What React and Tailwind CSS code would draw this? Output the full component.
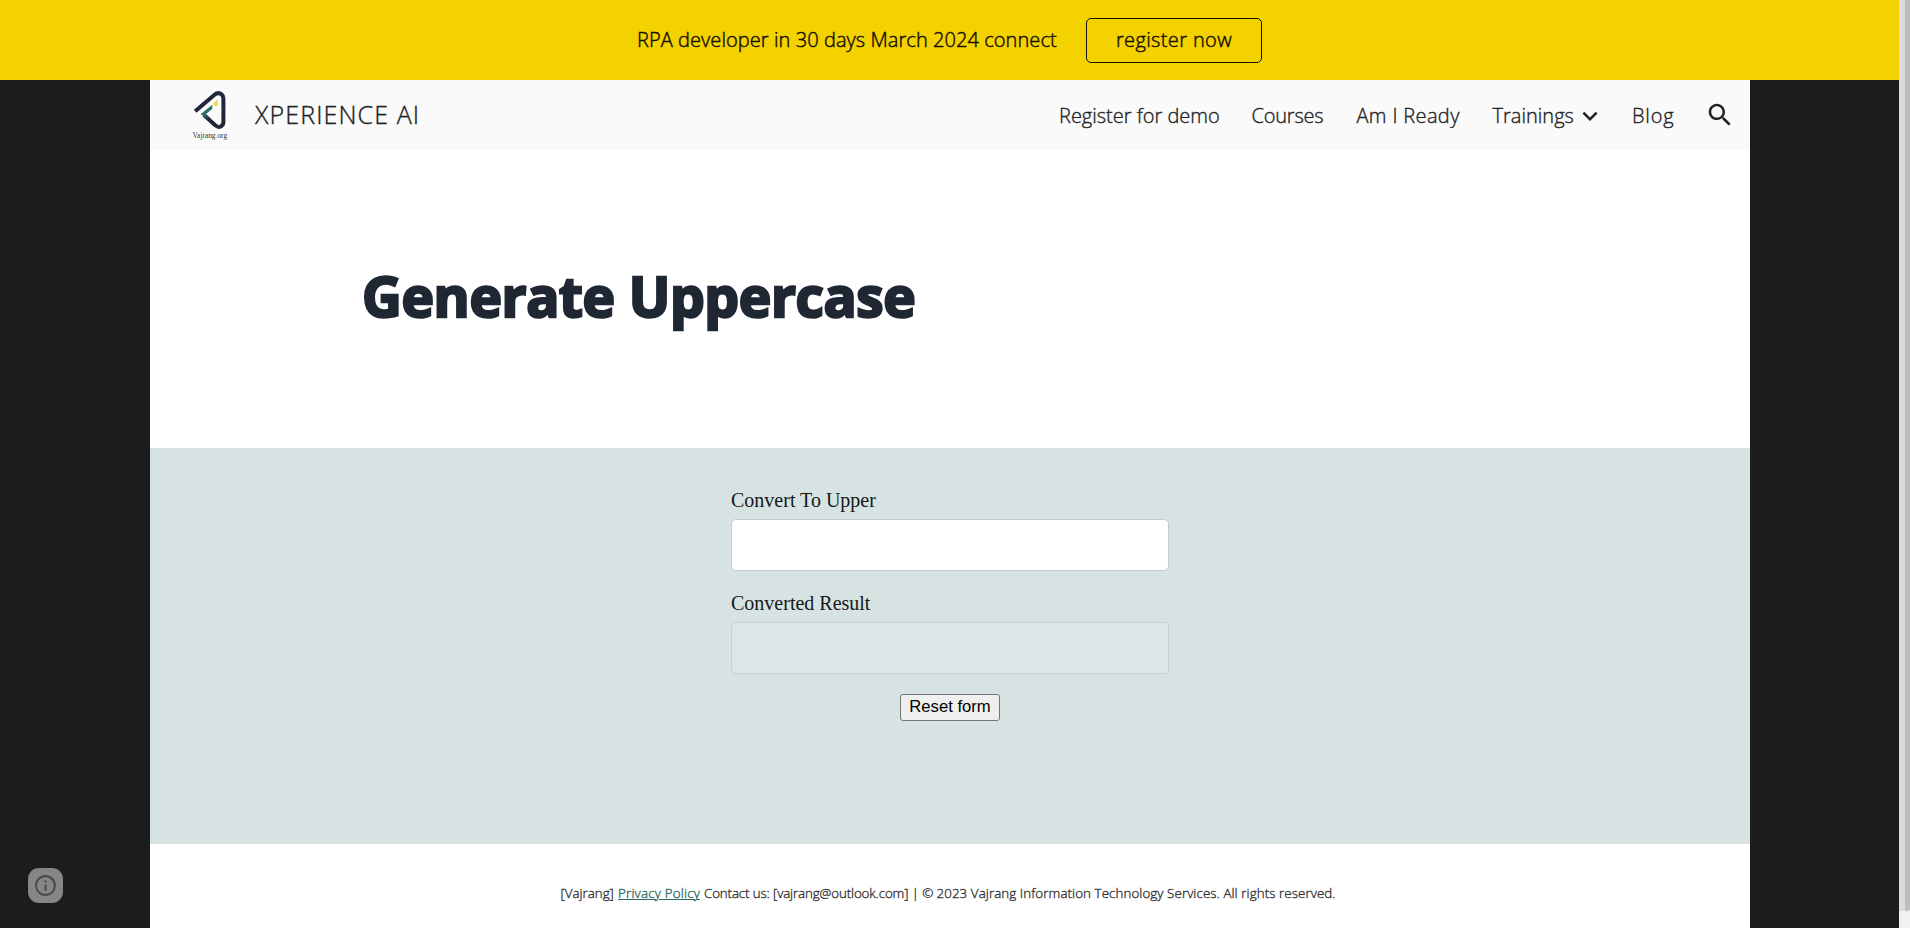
import React from 'react';

function Logo() {
  return (
    <svg className="mt-[8px] h-[56px] w-[44px] shrink-0" viewBox="188 88 44 56" fill="none">
      <path d="M195.2 111.3 L214.5 94.8 Q218 91.8 221.3 94.2 Q223.4 95.8 223.4 98.5 V122 Q223.4 125 220.8 126.5 Q218 127.8 215.5 125.4 L204 115" stroke="#20273a" strokeWidth="4" strokeLinejoin="round" />
      <path d="M200.5 114.2 L212.3 104.8 V108.8 L205.6 114.6 L208.4 118.8 Z" fill="#2d6f70" />
      <path d="M213.5 103 L217.6 99.5 V106 H213.8 Z" fill="#f1d54a" />
      <text x="192.6" y="138" fontFamily="Liberation Serif, serif" fontSize="8" fill="#333" strokeWidth="0" textLength="34.5" lengthAdjust="spacingAndGlyphs">Vajrang.org</text>
    </svg>
  );
}

function Header() {
  return (
    <header className="flex h-[70px] justify-between bg-[#fafafa] text-[20px] leading-[71px] text-[#212121]">
      <div className="flex pl-[38px]">
        <Logo />
        <div className="ml-[23px] whitespace-nowrap text-[25px] leading-[68px] tracking-[1.1px]">XPERIENCE AI</div>
      </div>
      <nav className="flex whitespace-nowrap">
        <a className="w-[192.5px]">Register for demo</a>
        <a className="w-[105px] tracking-[-0.2px]">Courses</a>
        <a className="w-[136px] tracking-[0.35px]">Am I Ready</a>
        <div className="flex w-[139.5px]">
          <a className="w-[82.5px] tracking-[0.02px]">Trainings</a>
          <svg className="mt-[21px] h-[30px] w-[30px]" viewBox="0 0 24 24" fill="#212121">
            <path d="M16.59 8.59L12 13.17 7.41 8.59 6 10l6 6 6-6z" />
          </svg>
        </div>
        <a className="w-[73px] tracking-[0.8px]">Blog</a>
        <svg className="mt-[20px] mr-[15px] h-[30px] w-[30px]" viewBox="0 0 24 24" fill="#212121">
          <path d="M15.5 14h-.79l-.28-.27C15.41 12.59 16 11.11 16 9.5 16 5.91 13.09 3 9.5 3S3 5.91 3 9.5 5.91 16 9.5 16c1.61 0 3.09-.59 4.23-1.57l.27.28v.79l5 4.99L20.49 19l-4.99-5zm-6 0C7.01 14 5 11.99 5 9.5S7.01 5 9.5 5 14 7.01 14 9.5 11.99 14 9.5 14z" />
        </svg>
      </nav>
    </header>
  );
}

function ConvertForm() {
  return (
    <section className="h-[396px] bg-[#d7e3e2] pt-[36px]">
      <form className="mx-auto flex w-[438px] flex-col font-['Liberation_Serif',serif] text-[20px] leading-[30px] text-[#151919] [-webkit-text-stroke:0px]">
        <label htmlFor="source" className="pt-px">Convert To Upper</label>
        <input id="source" className="mt-[4px] h-[52px] rounded-[5px] border border-[#c3cdcd] bg-white" />
        <label htmlFor="result" className="mt-[17px]">Converted Result</label>
        <input id="result" disabled className="mt-[4px] h-[52px] rounded-[5px] border border-[#c6d1d1] bg-[#dce6e6]" />
        <button type="reset" className="mt-[20px] flex h-[27px] w-[100px] justify-center self-center whitespace-nowrap rounded-[3px] border border-[#767676] bg-[#efefef] pb-[2px] font-['Liberation_Sans',sans-serif] text-[16.67px] font-normal leading-[23px] text-black">Reset form</button>
      </form>
    </section>
  );
}

export default function App() {
  return (
    <div className="flex h-[928px] w-[1910px] overflow-hidden bg-[#1c1c1c] font-['Open_Sans',sans-serif] font-light [-webkit-text-stroke:0.35px_currentColor]">
      <div className="flex w-[1899px] flex-col">
        <div className="flex h-[80px] shrink-0 bg-[#f4d200] pl-[637px] text-[20px] text-[#140f00] [-webkit-text-stroke:0.45px_currentColor]">
          <p className="w-[449px] whitespace-nowrap leading-[80px] tracking-[0.07px]">RPA developer in 30 days March 2024 connect</p>
          <a className="mt-[18px] h-[45px] w-[176px] rounded-[5px] border border-[#140f00] text-center leading-[41px] tracking-[0.37px]">register now</a>
        </div>
        <div className="ml-[150px] flex w-[1600px] grow flex-col bg-white">
          <Header />
          <section className="h-[298px] pl-[212px] pt-[106px]">
            <h1 className="whitespace-nowrap text-[55px] font-bold leading-[80px] tracking-[-0.35px] text-[#1f2733] [-webkit-text-stroke:2.5px_#1f2733]">Generate Uppercase</h1>
          </section>
          <ConvertForm />
          <footer className="flex grow whitespace-nowrap pl-[410.5px] pt-[33px] text-[13.33px] leading-[32px] text-[#333]">
            <span className="w-[57.5px]">[Vajrang]</span>
            <a className="mr-[4px] w-[82px] tracking-[0.2px] text-[#2a6b5e] underline decoration-1">Privacy Policy</a>
            <span className="w-[232.5px] tracking-[-0.12px]">Contact us: [vajrang@outlook.com] | ©</span>
            <span className="tracking-[0.09px]">2023 Vajrang Information Technology Services. All rights reserved.</span>
          </footer>
        </div>
      </div>
      <div className="w-[11px] bg-[#f1f1f1]">
        <div className="flex h-[911px] rounded-b bg-[#cfcfcf]">
          <div className="w-[6px] bg-[#dcdcdc]" />
          <div className="grow rounded-b bg-[#bdbdbd]" />
        </div>
      </div>
      <button aria-label="Site information" className="absolute left-[28px] top-[868px] flex h-[35px] w-[35px] items-center justify-center rounded-[11px] bg-[#868686]">
        <svg className="h-[25px] w-[25px]" viewBox="0 0 24 24" fill="#4b4b4b">
          <path d="M11 7h2v2h-2zm0 4h2v6h-2zm1-9C6.48 2 2 6.48 2 12s4.48 10 10 10 10-4.48 10-10S17.52 2 12 2zm0 18c-4.41 0-8-3.59-8-8s3.59-8 8-8 8 3.59 8 8-3.59 8-8 8z" />
        </svg>
      </button>
    </div>
  );
}
